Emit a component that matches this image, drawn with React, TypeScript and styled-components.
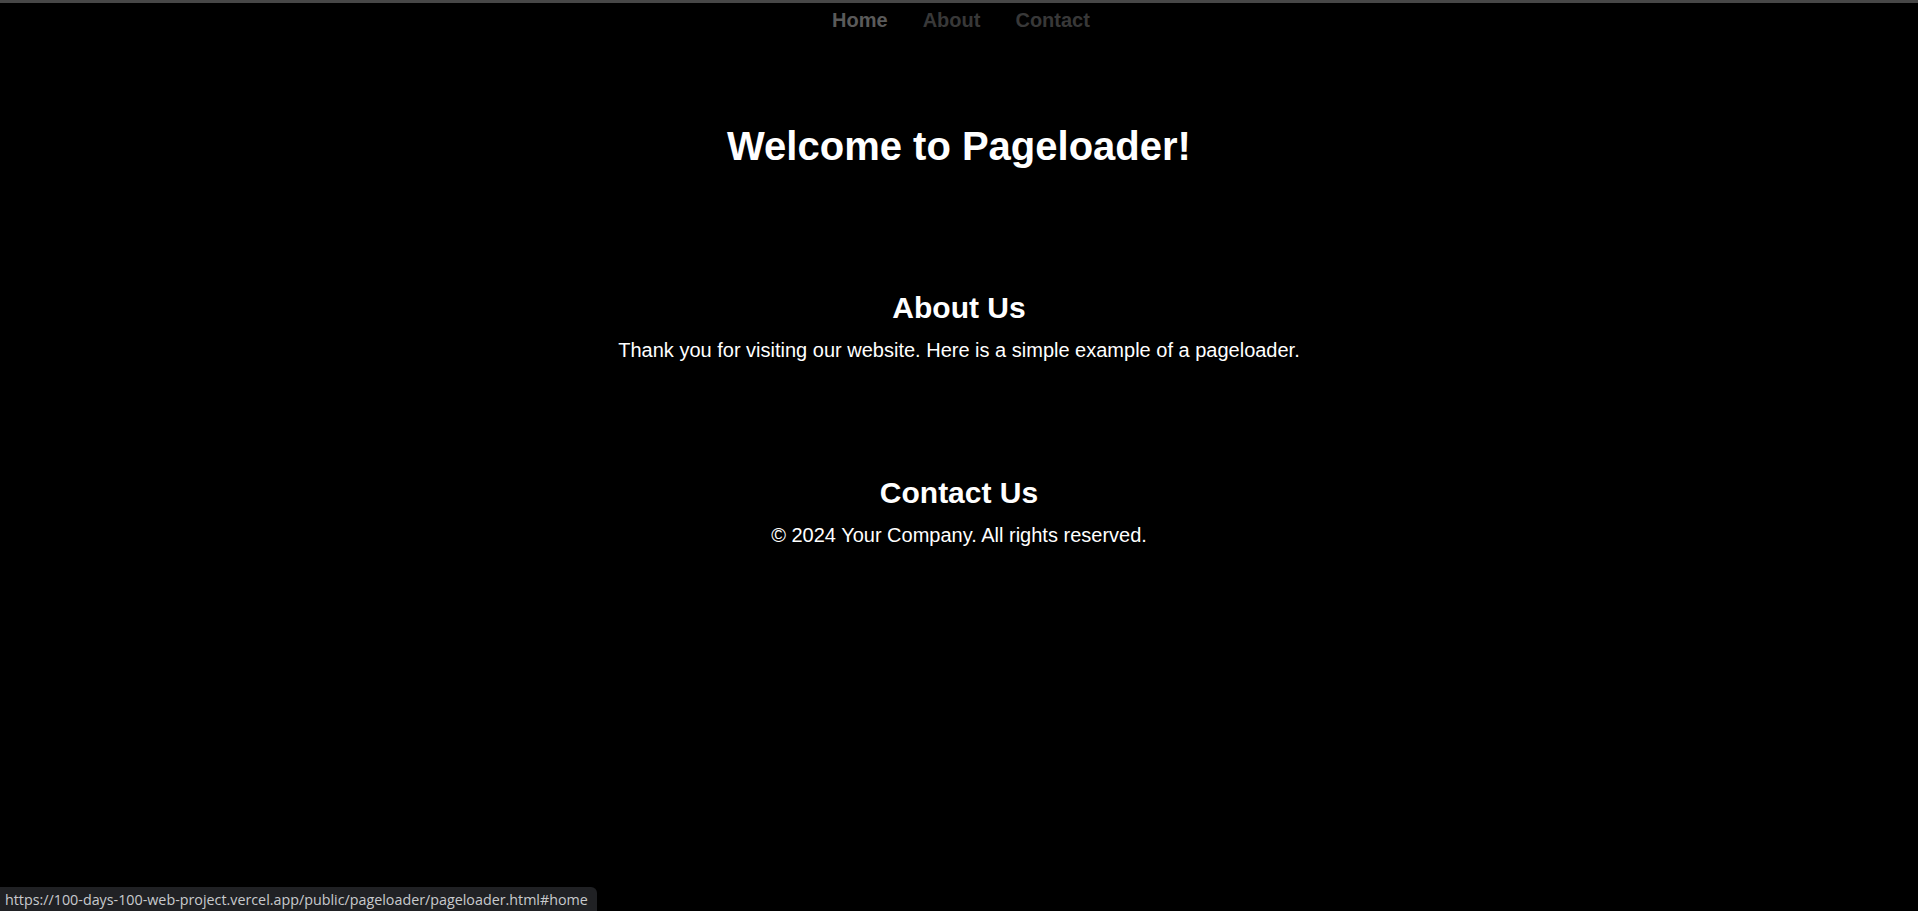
import React from "react";
import styled, { createGlobalStyle } from "styled-components";

const GlobalStyle = createGlobalStyle`
  html, body {
    margin: 0;
    padding: 0;
    background: #000;
  }
  body {
    font-family: "Liberation Sans", Arial, sans-serif;
    font-size: 20px;
    color: #fff;
  }
`;

const Page = styled.div`
  min-height: 911px;
  display: flex;
  flex-direction: column;
  align-items: center;
  border-top: 3px solid #474747;
  box-sizing: border-box;
`;

const Nav = styled.nav`
  display: flex;
  justify-content: center;
  gap: 35px;
  padding: 6px 0 0 4px;
`;

const NavLink = styled.a<{ $active?: boolean }>`
  font-weight: bold;
  font-size: 20px;
  line-height: 23px;
  text-decoration: none;
  color: ${(p) => (p.$active ? "#5a5a5a" : "#383838")};
`;

const Title = styled.h1`
  margin: 91px 0 0;
  font-size: 40px;
  line-height: 46px;
  font-weight: bold;
`;

const Section = styled.section<{ $top: number }>`
  margin-top: ${(p) => p.$top}px;
  display: flex;
  flex-direction: column;
  align-items: center;
  gap: 14px;
`;

const Heading = styled.h2`
  margin: 0;
  font-size: 30px;
  line-height: 34px;
  font-weight: bold;
`;

const Text = styled.p`
  margin: 0;
  font-size: 20px;
  line-height: 23px;
`;

const StatusBar = styled.div`
  position: fixed;
  left: 0;
  bottom: 0;
  height: 24px;
  padding: 0 9px 0 5px;
  display: flex;
  align-items: center;
  background: #202124;
  border-top-right-radius: 6px;
  color: #c8cacd;
  font-family: "Open Sans", "Noto Sans", sans-serif;
  font-size: 14.3px;
`;

export default function App() {
  return (
    <>
      <GlobalStyle />
      <Page>
        <Nav>
          <NavLink href="#home" $active>
            Home
          </NavLink>
          <NavLink href="#about">About</NavLink>
          <NavLink href="#contact">Contact</NavLink>
        </Nav>
        <Title>Welcome to Pageloader!</Title>
        <Section $top={122}>
          <Heading>About Us</Heading>
          <Text>
            Thank you for visiting our website. Here is a simple example of a pageloader.
          </Text>
        </Section>
        <Section $top={114}>
          <Heading>Contact Us</Heading>
          <Text>© 2024 Your Company. All rights reserved.</Text>
        </Section>
      </Page>
      <StatusBar>
        https://100-days-100-web-project.vercel.app/public/pageloader/pageloader.html#home
      </StatusBar>
    </>
  );
}
